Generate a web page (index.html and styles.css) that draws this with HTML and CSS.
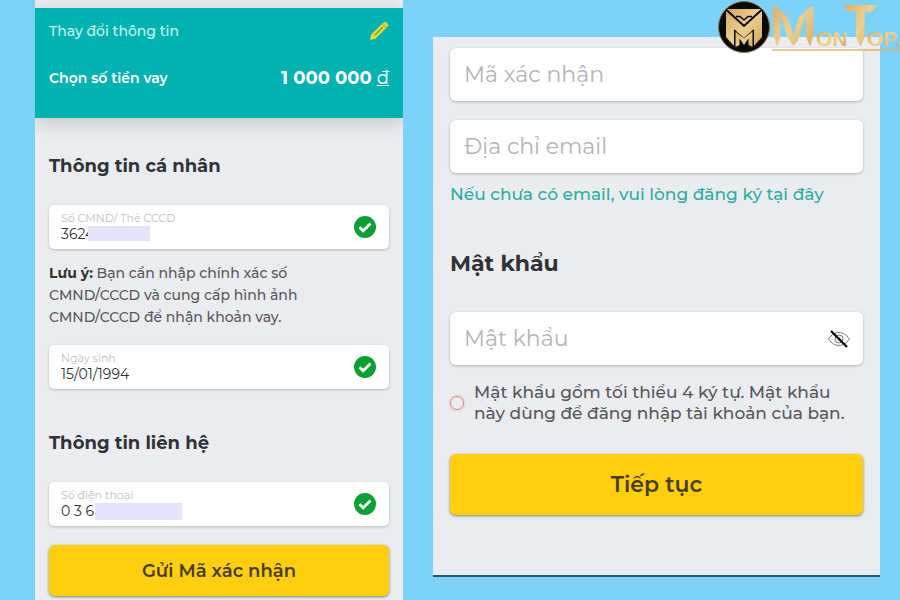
FILE: index.html
```html
<!DOCTYPE html>
<html lang="vi">
<head>
<meta charset="utf-8">
<meta name="viewport" content="width=device-width, initial-scale=1">
<title>MonTop - Thông tin cá nhân</title>
<link rel="stylesheet" href="styles.css">
</head>
<body>
<main class="page">
  <form class="panel panel-info">
    <header class="summary">
      <div class="summary-row">
        <a class="edit-link" href="#">Thay đổi thông tin</a>
        <svg class="pencil" viewBox="0 0 20 20" aria-hidden="true">
          <path d="M1 19l1.300-5.400L13.800 2.100 17.900 6.200 6.400 17.700z" fill="#f3d92b"/>
          <path d="M14.600 1.400c.8-.9 2-.8 2.800-.1l1.300 1.300c.8.8.8 2 0 2.800l-.8.8-4.100-4.100z" fill="#e3d240"/>
          <path d="M5.500 14.500L14 6" stroke="#54a765" stroke-width="1.300"/>
          <path d="M13.300 3.300L16.700 6.700" stroke="#54a765" stroke-width=".8"/>
        </svg>
      </div>
      <div class="summary-row">
        <span class="loan-label">Chọn số tiền vay</span>
        <span class="loan-value">1 000 000 <span class="currency">đ</span></span>
      </div>
    </header>
    <div class="info-body">
      <h2 class="title">Thông tin cá nhân</h2>
      <div class="field">
        <div class="field-text">
          <label for="idcard">Số CMND/ Thẻ CCCD</label>
          <input id="idcard" type="text" value="3624">
          <span class="mask mask-id"></span>
        </div>
        <svg class="check" viewBox="0 0 22 22" aria-hidden="true"><circle cx="11" cy="11" r="11" fill="#0c9f34"/><path d="M5.500 11.300l3.700 3.500 7.300-7.200" fill="none" stroke="#fff" stroke-width="2.800"/></svg>
      </div>
      <p class="note"><b>Lưu ý:</b> Bạn cần nhập chính xác số<br>CMND/CCCD và cung cấp hình ảnh<br>CMND/CCCD để nhận khoản vay.</p>
      <div class="field">
        <div class="field-text">
          <label for="birth">Ngày sinh</label>
          <input id="birth" type="text" value="15/01/1994">
        </div>
        <svg class="check" viewBox="0 0 22 22" aria-hidden="true"><circle cx="11" cy="11" r="11" fill="#0c9f34"/><path d="M5.500 11.300l3.700 3.500 7.300-7.200" fill="none" stroke="#fff" stroke-width="2.800"/></svg>
      </div>
      <h2 class="title title-contact">Thông tin liên hệ</h2>
      <div class="field">
        <div class="field-text">
          <label for="phone">Số điện thoại</label>
          <input id="phone" type="text" value="0 3 6">
          <span class="mask mask-phone"></span>
        </div>
        <svg class="check" viewBox="0 0 22 22" aria-hidden="true"><circle cx="11" cy="11" r="11" fill="#0c9f34"/><path d="M5.500 11.300l3.700 3.500 7.300-7.200" fill="none" stroke="#fff" stroke-width="2.800"/></svg>
      </div>
      <button class="btn btn-send" type="button">Gửi Mã xác nhận</button>
    </div>
  </form>

  <form class="panel panel-password">
    <div class="box"><input type="text" aria-label="Mã xác nhận" placeholder="Mã xác nhận"></div>
    <div class="box"><input type="email" aria-label="Địa chỉ email" placeholder="Địa chỉ email"></div>
    <a class="register" href="#">Nếu chưa có email, vui lòng đăng ký tại đây</a>
    <h2 class="title title-password">Mật khẩu</h2>
    <div class="box">
      <input type="password" aria-label="Mật khẩu" placeholder="Mật khẩu">
      <button class="eye" type="button" aria-label="Hiện mật khẩu">
        <svg viewBox="0 0 22 18" aria-hidden="true">
          <path d="M.7 9C3.500 4.400 7 2.600 11 2.600S18.500 4.400 21.300 9C18.500 13.600 15 15.400 11 15.400S3.500 13.600.7 9z" fill="none" stroke="#777"/>
          <circle cx="11" cy="9" r="4" fill="none" stroke="#777"/><circle cx="11" cy="9" r="1.500" fill="#555"/>
          <path d="M3 1L19 17" stroke="#000" stroke-width="2.200"/>
        </svg>
      </button>
    </div>
    <div class="rule">
      <span class="ring"></span>
      <p>Mật khẩu gồm tối thiểu 4 ký tự. Mật khẩu<br>này dùng để đăng nhập tài khoản của bạn.</p>
    </div>
    <button class="btn btn-next" type="button">Tiếp tục</button>
  </form>

  <svg class="logo" viewBox="0 0 184 56" role="img" aria-label="MonTop">
    <defs>
      <linearGradient id="gold" x1="0" y1="0" x2="1" y2="1"><stop offset="0" stop-color="#d3a65b"/><stop offset=".5" stop-color="#edcf91"/><stop offset="1" stop-color="#d0a359"/></linearGradient>
      <clipPath id="spikes"><path d="M56 3L77.500 22 99 3V30L94 47 88 32 77.500 46 67 32 61 47 56 30z"/></clipPath>
      <clipPath id="arrow"><path d="M124 0H165L156 12H151V32L144.500 47 138 32V12H133z"/></clipPath>
    </defs>
    <circle cx="28" cy="27" r="25.500" fill="#0b0a0a" stroke="#8d7447"/>
    <path d="M10 9H46V37L38 46V31L28 40 18 31V46L10 37z" fill="url(#gold)"/>
    <path d="M10 9.500L28 26 46 9.500" fill="none" stroke="#0b0a0a" stroke-width="2"/>
    <path d="M20 16.500H24L28 20 32 16.500H36" fill="none" stroke="#0b0a0a" stroke-width="1.500"/>
    <path d="M18 29L28 38 38 29V47H18z" fill="#0b0a0a"/>
    <path d="M19.500 31.500L28 38.500 36.500 31.500V47L32.500 45V38.500L28 45 23.500 38.500V45L19.500 47z" fill="url(#gold)"/>
    <g class="wordmark" fill="url(#gold)">
      <g clip-path="url(#spikes)"><text x="53" y="46" font-size="58">M</text></g>
      <text x="100" y="46" font-size="21">ON</text>
      <g clip-path="url(#arrow)"><text x="126" y="46" font-size="60">T</text></g>
      <text x="151" y="46" font-size="21">OP.</text>
    </g>
    <path d="M56 50H184" stroke="#deb56d" stroke-width="1.500"/>
  </svg>
</main>
</body>
</html>
```

FILE: styles.css
```css
* {
  box-sizing: border-box;
}

body {
  margin: 0;
  background: #7ed2f7;
  color: #303238;
  font-family: Montserrat, Inter, "Open Sans", sans-serif;
}

h2,
p {
  margin: 0;
}

input,
button {
  font: inherit;
  color: inherit;
  border: 0;
}

input {
  width: 100%;
  min-width: 0;
  padding: 0;
  background: transparent;
  outline: 0;
}

.page {
  position: relative;
  display: grid;
  grid-template-columns: 368fr 447fr;
  gap: 30px;
  align-items: start;
  min-height: 100vh;
  padding: 0 20px 0 35px;
  overflow: hidden;
}

.panel {
  background: #ebecef;
}

.panel-info {
  min-height: 100vh;
  padding-top: 8px;
  overflow: hidden;
}

.summary {
  display: flex;
  flex-direction: column;
  gap: 23px;
  padding: 11px 14px 28px;
  background: #02b2b1;
  color: #fff;
  box-shadow: 0 4px 18px rgba(0, 0, 0, 0.18);
}

.summary-row {
  display: flex;
  justify-content: space-between;
  align-items: center;
  height: 24px;
}

.edit-link {
  color: #c8f2f1;
  font-size: 14px;
  font-weight: 500;
  text-decoration: none;
}

.pencil {
  width: 20px;
  height: 20px;
}

.loan-label {
  font-size: 14px;
  font-weight: 600;
}

.loan-value {
  font-size: 18px;
  font-weight: 700;
}

.currency {
  font-weight: 400;
  text-decoration: underline;
}

.info-body {
  padding: 36px 14px 4px;
}

.title {
  font-size: 18px;
  font-weight: 700;
  line-height: 24px;
}

.title-contact {
  margin: 42px 0 27px;
}

.field {
  display: flex;
  align-items: center;
  justify-content: space-between;
  height: 44px;
  padding: 0 13px 0 12px;
  border-radius: 5px;
  background: #fff;
  box-shadow: 0 1px 3px rgba(0, 0, 0, 0.22);
}

.title + .field {
  margin-top: 27px;
}

.field-text {
  position: relative;
  flex: 1;
  display: flex;
  flex-direction: column;
}

.field-text label {
  color: #c0c0c2;
  font-size: 11px;
  line-height: 14px;
}

.field-text input {
  height: 18px;
  font-size: 14px;
}

.mask {
  position: absolute;
  background: #e4e3fa;
}

.mask-id {
  left: 27px;
  top: 15px;
  width: 62px;
  height: 15px;
}

.mask-phone {
  left: 34px;
  top: 15px;
  width: 87px;
  height: 17px;
}

.check {
  width: 22px;
  height: 22px;
}

.note {
  margin: 13px 0 17px;
  color: #55575c;
  font-size: 14px;
  font-weight: 500;
  line-height: 22px;
}

.note b {
  color: #303238;
}

.btn {
  display: block;
  width: 100%;
  border-radius: 6px;
  background: #fecf0f;
  color: #493d25;
  font-weight: 600;
  box-shadow: 0 1px 3px rgba(60, 50, 20, 0.6);
}

.btn-send {
  height: 51px;
  margin-top: 19px;
  font-size: 18px;
}

.panel-password {
  margin-top: 37px;
  padding: 11px 17px 60px;
  border-bottom: 2px solid #245a66;
}

.box {
  display: flex;
  align-items: center;
  height: 53px;
  padding: 0 13px 0 14px;
  border-radius: 6px;
  background: #fff;
  box-shadow: 0 1px 3px rgba(0, 0, 0, 0.25);
}

.box + .box {
  margin-top: 19px;
}

.box input {
  flex: 1;
  font-size: 22px;
}

.box input::placeholder {
  color: #b4b4b6;
  opacity: 1;
}

.register {
  display: block;
  margin-top: 9px;
  color: #2cada3;
  font-size: 17px;
  font-weight: 500;
  line-height: 24px;
  text-decoration: none;
  white-space: nowrap;
}

.title-password {
  margin: 44px 0 34px;
  font-size: 22px;
  line-height: 28px;
}

.eye {
  display: flex;
  padding: 0;
  background: none;
}

.eye svg {
  width: 22px;
  height: 18px;
}

.rule {
  display: flex;
  align-items: center;
  gap: 10px;
  margin-top: 17px;
  color: #55575c;
  font-size: 17px;
  font-weight: 500;
  line-height: 21px;
  white-space: nowrap;
}

.ring {
  width: 14px;
  height: 14px;
  border: 1px solid #d98482;
  border-radius: 50%;
  box-shadow: 0 0 3px #f0a09e;
}

.btn-next {
  height: 61px;
  margin-top: 30px;
  font-size: 22px;
}

.logo {
  position: absolute;
  top: 0;
  right: 0;
  width: 184px;
  height: 56px;
}

.wordmark {
  font-family: "Liberation Sans", sans-serif;
  font-weight: 700;
}
```
